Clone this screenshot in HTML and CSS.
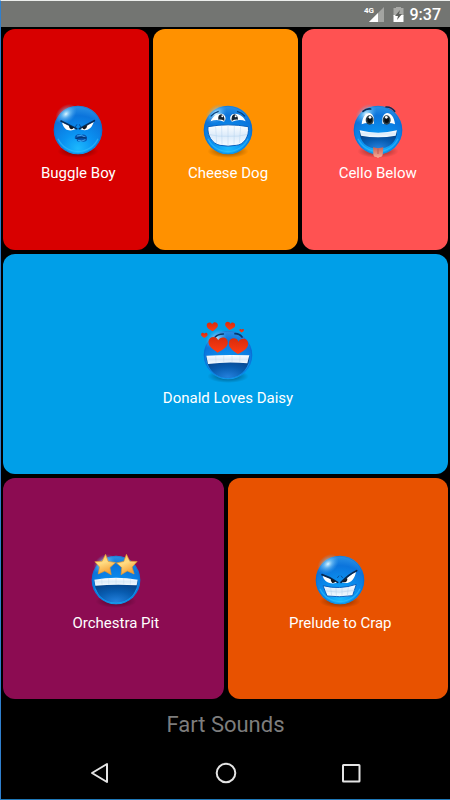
FILE: index.html
```html
<!DOCTYPE html>
<html lang="en">
<head>
<meta charset="utf-8">
<meta name="viewport" content="width=device-width, initial-scale=1">
<title>Fart Sounds</title>
<link rel="stylesheet" href="styles.css">
</head>
<body>
<svg class="defs" width="0" height="0" aria-hidden="true">
  <defs>
    <radialGradient id="ball" cx="0.5" cy="0.88" r="0.9">
      <stop offset="0" stop-color="#1cb9fd"/>
      <stop offset="0.35" stop-color="#0a93f2"/>
      <stop offset="0.75" stop-color="#0b74dc"/>
      <stop offset="1" stop-color="#2f95e6"/>
    </radialGradient>
    <radialGradient id="shine">
      <stop offset="0" stop-color="#e0f8ff"/>
      <stop offset="0.4" stop-color="#8bd2fb" stop-opacity="0.6"/>
      <stop offset="1" stop-color="#4aa8f0" stop-opacity="0"/>
    </radialGradient>
    <radialGradient id="shade">
      <stop offset="0" stop-color="#000" stop-opacity="0.5"/>
      <stop offset="1" stop-color="#000" stop-opacity="0"/>
    </radialGradient>
    <linearGradient id="teeth" x2="0" y2="1">
      <stop offset="0" stop-color="#fff"/>
      <stop offset="0.5" stop-color="#dcebfa"/>
      <stop offset="1" stop-color="#f6fbff"/>
    </linearGradient>
    <radialGradient id="mouth" cx="0.5" cy="0.95" r="0.8">
      <stop offset="0" stop-color="#2380dc"/>
      <stop offset="0.55" stop-color="#085cb0"/>
      <stop offset="1" stop-color="#06448c"/>
    </radialGradient>
    <linearGradient id="gold" x2="0.4" y2="1">
      <stop offset="0" stop-color="#ffc24b"/>
      <stop offset="0.5" stop-color="#ffdc83"/>
      <stop offset="1" stop-color="#f5a238"/>
    </linearGradient>
    <linearGradient id="red" x2="0" y2="1">
      <stop offset="0" stop-color="#d92c0c"/>
      <stop offset="1" stop-color="#ff3d13"/>
    </linearGradient>
    <linearGradient id="tongue" x2="0" y2="1">
      <stop offset="0" stop-color="#c96558"/>
      <stop offset="1" stop-color="#f9ad98"/>
    </linearGradient>
    <g id="head">
      <ellipse cx="84" cy="154" rx="62" ry="20" fill="url(#shade)"/>
      <circle cx="84" cy="90" r="73" fill="url(#ball)"/>
      <circle cx="84" cy="90" r="71" fill="none" stroke="#0a62c0" stroke-width="3" opacity="0.35"/>
      <path d="M24 116A66 66 0 0 0 144 116" fill="none" stroke="#36c3ff" stroke-width="4" opacity="0.55"/>
      <ellipse cx="48" cy="42" rx="36" ry="26" fill="url(#shine)" transform="rotate(-40 48 42)"/>
    </g>
    <path id="heart" d="M0 24C-12 16-29 8-29-7C-29-25-6-27 0-13C6-27 29-25 29-7C29 8 12 16 0 24Z" fill="url(#red)"/>
    <path id="star" d="M0-33L9-12L31-10L15 6L20 27L0 17L-19 27L-16 6L-31-9L-9-12Z" fill="url(#gold)" stroke="#e8982e" stroke-width="2" stroke-linejoin="round"/>
  </defs>
</svg>

<div class="screen">
  <header class="status">
    <svg class="signal" viewBox="0 0 20 17" role="img" aria-label="4G signal">
      <text x="0" y="7" class="network">4G</text>
      <path d="M20 1V16H5Z" fill="#a3a4a1"/>
      <path d="M14 7V16H5Z" fill="#fff"/>
    </svg>
    <svg class="battery" viewBox="0 0 11 17" role="img" aria-label="Battery charging">
      <path d="M3 1H8V2H10.500V10H.5V2H3Z" fill="#a8a9a6"/>
      <path d="M.5 9H10.500V16H.5Z" fill="#fff"/>
      <path d="M7 4L2 10H5L4 14L9 8H6Z" fill="#5e605d"/>
    </svg>
    <time class="clock">9:37</time>
  </header>

  <main class="board">
    <div class="row">
      <button class="tile crimson">
        <svg class="face" viewBox="0 0 168 180" aria-hidden="true">
          <use href="#head"/>
          <g transform="translate(-38 -7)">
            <path d="M74 74L116 92C111 99 93 101 85 94C79 89 76 82 74 74Z" fill="#fff"/>
            <path d="M169 72L127 92C132 99 150 100 158 92C164 86 167 80 169 72Z" fill="#fff"/>
            <path d="M71 70L118 93M171 69L126 93" fill="none" stroke="#052d5d" stroke-width="5" stroke-linecap="round"/>
            <path d="M95 83L109 89Q108 95 102 95Q95 93 95 83ZM150 82L135 89Q136 96 142 95Q149 92 150 82Z" fill="#111923"/>
            <path d="M114 88L119 80M130 88L126 80" stroke="#034b9c" stroke-width="3"/>
            <path d="M113 124C110 111 124 107 132 112C142 107 151 116 149 123C151 132 137 134 129 130C121 134 116 130 120 124Z" fill="#0756b2"/>
            <path d="M119 115Q132 109 145 119M122 128Q134 133 144 126" fill="none" stroke="#43a3ed" stroke-width="3"/>
            <path d="M116 123Q130 117 147 121" fill="none" stroke="#053777" stroke-width="4"/>
          </g>
        </svg>
        <span class="name">Buggle Boy</span>
      </button>
      <button class="tile amber">
        <svg class="face" viewBox="0 0 168 180" aria-hidden="true">
          <use href="#head"/>
          <g transform="translate(-44 -7)">
            <path d="M76 71C81 57 98 44 114 50C124 57 121 69 116 72Q93 63 76 71Z" fill="#fff"/>
            <path d="M181 71C176 57 158 43 141 50C131 57 134 68 140 72Q163 63 181 71Z" fill="#fff"/>
            <path d="M99 66Q97 51 108 50Q119 53 117 70Q110 65 99 66ZM139 70Q137 53 147 50Q158 52 158 66Q148 65 139 70Z" fill="#142331"/>
            <circle cx="111" cy="56" r="3" fill="#fff"/><circle cx="151" cy="56" r="3" fill="#fff"/>
            <path d="M76 56Q86 45 100 41M155 41Q170 45 179 56" fill="none" stroke="#05417f" stroke-width="4"/>
            <path d="M68 87Q128 76 189 87C193 118 174 142 153 143Q128 148 104 143C80 138 65 113 68 87Z" fill="url(#teeth)" stroke="#0a60be" stroke-width="3"/>
            <path d="M70 110Q98 118 128 116Q160 118 187 110M91 86L94 137M109 84L110 142M128 83V144M147 84L146 142M166 86L162 136" fill="none" stroke="#abcdea" stroke-width="2" opacity="0.6"/>
          </g>
        </svg>
        <span class="name">Cheese Dog</span>
      </button>
      <button class="tile coral">
        <svg class="face" viewBox="0 0 168 180" aria-hidden="true">
          <use href="#head"/>
          <g transform="translate(-58 -7)">
            <path d="M93 80C95 58 105 46 116 46C128 47 133 65 129 79Q110 72 93 80Z" fill="#fff"/>
            <path d="M193 80C191 58 181 46 169 46C157 47 152 65 156 79Q176 72 193 80Z" fill="#fff"/>
            <ellipse cx="117" cy="67" rx="12" ry="14" fill="#2a3d49"/>
            <ellipse cx="168" cy="67" rx="12" ry="14" fill="#2a3d49"/>
            <ellipse cx="117" cy="67" rx="7" ry="9" fill="#080d12"/>
            <ellipse cx="168" cy="67" rx="7" ry="9" fill="#080d12"/>
            <circle cx="118" cy="59" r="4" fill="#fff"/><circle cx="167" cy="59" r="4" fill="#fff"/>
            <path d="M97 41Q107 32 120 34M166 28Q182 27 192 41" fill="none" stroke="#062d5a" stroke-width="5" stroke-linecap="round"/>
            <path d="M87 99Q142 115 199 99C200 132 175 153 142 153C109 153 86 132 87 99Z" fill="url(#mouth)"/>
            <path d="M87 98Q142 112 199 98L195 114Q142 124 91 114Z" fill="url(#teeth)"/>
            <path d="M127 149Q142 154 158 149L156 172Q154 179 147 178L142 181L137 178Q129 179 128 171Z" fill="url(#tongue)"/>
            <path d="M142 153V169" stroke="#bf5a52" stroke-width="3"/>
          </g>
        </svg>
        <span class="name">Cello Below</span>
      </button>
    </div>

    <div class="row">
      <button class="tile sky">
        <svg class="face" viewBox="0 0 168 180" aria-hidden="true">
          <use href="#head"/>
          <g transform="translate(-134 -35)">
            <path d="M179 72Q187 62 204 62M239 61Q253 61 260 71" fill="none" stroke="#06386d" stroke-width="5" stroke-linecap="round"/>
            <path d="M153 127Q218 132 282 127C283 168 253 194 218 194C181 194 153 166 153 127Z" fill="url(#mouth)"/>
            <path d="M153 127Q218 123 282 126L276 150Q218 144 158 152Z" fill="url(#teeth)"/>
            <path d="M181 127L182 148M205 126V147M230 126V147M254 127L253 148" stroke="#bdd3e8" stroke-width="2" opacity="0.5"/>
            <use href="#heart" transform="translate(188 94) rotate(3)"/>
            <use href="#heart" transform="translate(249 98) rotate(3)"/>
            <use href="#heart" transform="translate(171 40) scale(.58) rotate(-3)"/>
            <use href="#heart" transform="translate(224 38) scale(.52) rotate(8)"/>
            <use href="#heart" transform="translate(147 66) scale(.34)"/>
            <use href="#heart" transform="translate(259 52) scale(.24)"/>
          </g>
        </svg>
        <span class="name">Donald Loves Daisy</span>
      </button>
    </div>

    <div class="row">
      <button class="tile plum">
        <svg class="face" viewBox="0 0 168 180" aria-hidden="true">
          <use href="#head"/>
          <g transform="translate(-69 -17)">
            <path d="M88 107Q153 112 218 107C218 150 188 175 153 175C117 175 89 150 88 107Z" fill="url(#mouth)"/>
            <path d="M88 106Q153 94 218 106L215 123Q153 119 91 124Z" fill="url(#teeth)"/>
            <path d="M110 103L111 121M131 101V120M153 101V120M176 101V120M197 103L196 121" stroke="#bdd3e8" stroke-width="2" opacity="0.5"/>
            <use href="#star" transform="translate(120 63) rotate(3)"/>
            <use href="#star" transform="translate(186 63) rotate(-3)"/>
          </g>
        </svg>
        <span class="name">Orchestra Pit</span>
      </button>
      <button class="tile orange">
        <svg class="face" viewBox="0 0 168 180" aria-hidden="true">
          <use href="#head"/>
          <g transform="translate(-83 -17)">
            <path d="M115 93L160 113C153 120 132 118 124 110C118 105 116 99 115 93Z" fill="#fff"/>
            <path d="M215 81L171 113C182 119 197 116 205 106C211 99 214 90 215 81Z" fill="#fff"/>
            <path d="M113 91Q135 98 160 114M217 79Q193 90 170 114" fill="none" stroke="#062850" stroke-width="5" stroke-linecap="round"/>
            <path d="M139 102L154 111Q151 117 144 116Q138 111 139 102ZM188 100L173 112Q180 116 186 112Q191 107 188 100Z" fill="#111923"/>
            <path d="M159 101L164 94M175 101L170 94" stroke="#07529f" stroke-width="3"/>
            <path d="M116 124Q166 137 216 120L205 154Q166 160 128 155Z" fill="url(#teeth)" stroke="#0a60be" stroke-width="3" stroke-linejoin="round"/>
            <path d="M122 140Q166 148 211 138M139 130L142 155M155 131L156 157M173 131V157M192 128L189 155" fill="none" stroke="#a9c9e6" stroke-width="2" opacity="0.6"/>
          </g>
        </svg>
        <span class="name">Prelude to Crap</span>
      </button>
    </div>
  </main>

  <h1 class="title">Fart Sounds</h1>

  <nav class="nav">
    <button class="key" aria-label="Back">
      <svg viewBox="0 0 22 22" aria-hidden="true"><path d="M18 2V20L3 11Z"/></svg>
    </button>
    <button class="key" aria-label="Home">
      <svg viewBox="0 0 22 22" aria-hidden="true"><circle cx="11" cy="11" r="9.3"/></svg>
    </button>
    <button class="key" aria-label="Overview">
      <svg viewBox="0 0 22 22" aria-hidden="true"><rect x="3" y="3" width="16.500" height="16.500" rx="0.5"/></svg>
    </button>
  </nav>
</div>
</body>
</html>
```
FILE: styles.css
```css
* {
  box-sizing: border-box;
}

body {
  margin: 0;
  background: #000;
  font-family: Roboto, "Liberation Sans", sans-serif;
}

button {
  margin: 0;
  padding: 0;
  border: 0;
  background: none;
  color: inherit;
  font: inherit;
  cursor: pointer;
}

.defs {
  position: absolute;
}

.screen {
  display: flex;
  flex-direction: column;
  min-height: 100vh;
  border-top: 1px solid #eceeec;
  border-left: 1px solid #2f7fce;
  border-bottom: 1px solid #1f78b8;
}

.status {
  display: flex;
  align-items: center;
  justify-content: flex-end;
  height: 26px;
  padding-right: 9px;
  background: #737572;
  color: #fff;
}

.signal {
  width: 20px;
  height: 17px;
  margin-right: 9px;
  overflow: visible;
}

.network {
  fill: #fff;
  font-size: 8px;
  font-weight: 700;
}

.battery {
  width: 11px;
  height: 17px;
  margin-right: 6px;
}

.clock {
  padding-top: 2px;
  font-size: 16px;
  font-weight: 500;
  line-height: 24px;
}

.board {
  display: flex;
  flex: 1;
  flex-direction: column;
  gap: 4px;
  padding: 2px 2px 0;
}

.row {
  display: flex;
  flex: 1;
  gap: 4px;
}

.tile {
  display: flex;
  flex: 1 1 0;
  flex-direction: column;
  align-items: center;
  justify-content: center;
  gap: 3px;
  padding: 5px 0 0 5px;
  border-radius: 12px;
  color: #fff;
}

.crimson { background: #d80000; }
.amber { background: #ff9100; }
.coral { background: #ff5252; }
.sky { background: #009fe8; }
.plum { background: #8c0c52; }
.orange { background: #e85200; }

.face {
  width: 56px;
  height: 60px;
  overflow: visible;
}

.name {
  font-size: 15px;
  line-height: 20px;
  white-space: nowrap;
}

.title {
  margin: 0;
  padding-top: 2px;
  color: #7d7d7d;
  font-size: 22px;
  font-weight: 400;
  line-height: 48px;
  text-align: center;
}

.nav {
  display: flex;
  height: 50px;
  padding: 0 36px 2px;
}

.key {
  display: flex;
  flex: 1;
  align-items: center;
  justify-content: center;
}

.key svg {
  width: 22px;
  height: 22px;
  fill: none;
  stroke: #e4e4e4;
  stroke-width: 2;
  stroke-linejoin: round;
}
```
